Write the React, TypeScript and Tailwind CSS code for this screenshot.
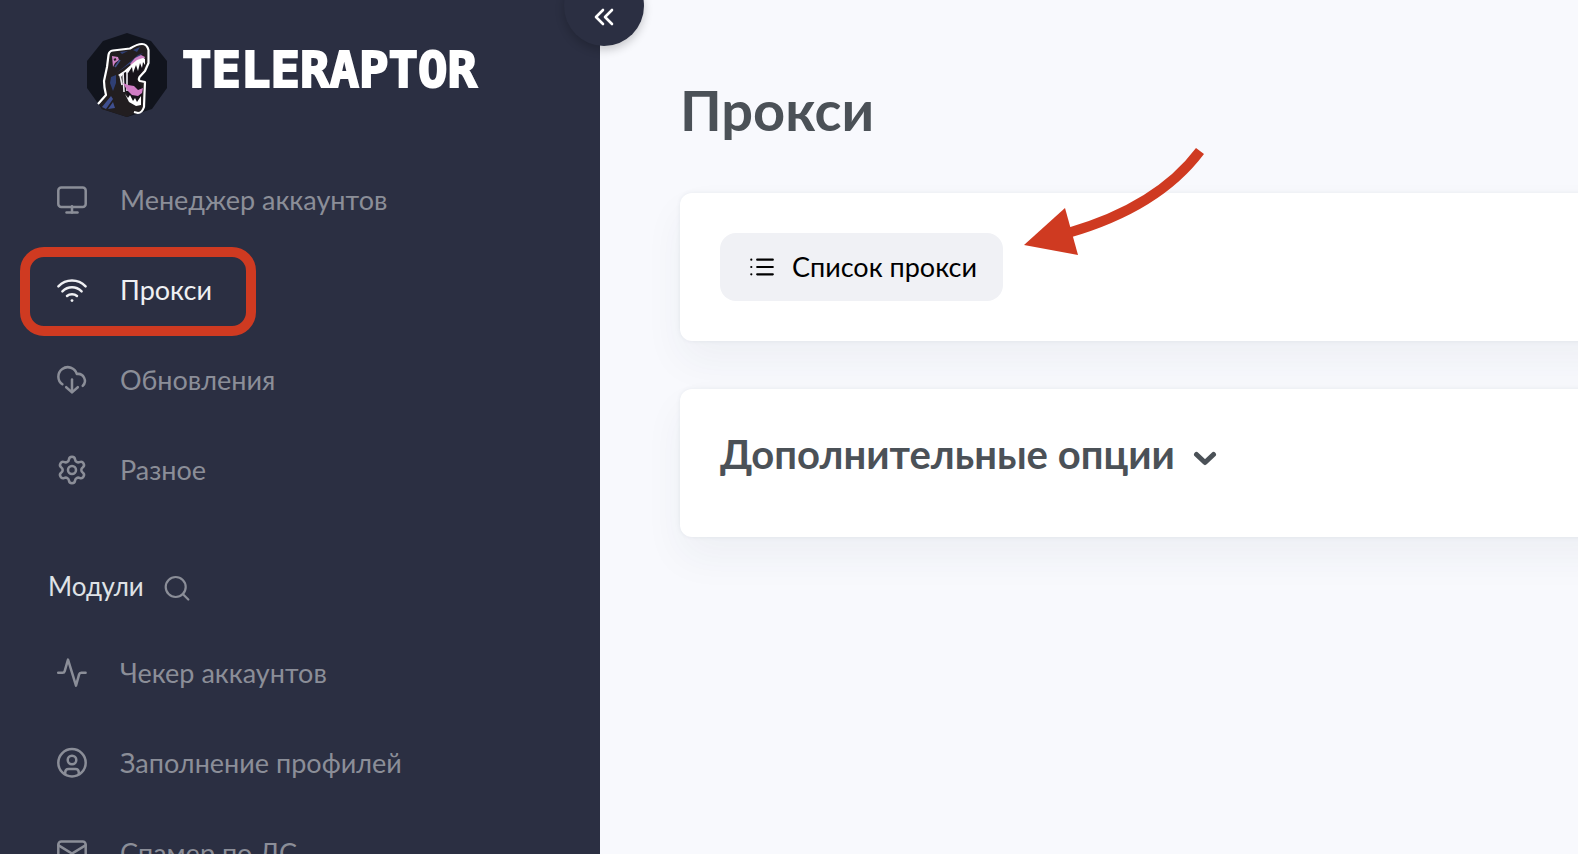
import React from 'react';
import { Settings } from 'lucide-react';

type IconProps = { children: React.ReactNode };

const NavIcon: React.FC<IconProps> = ({ children }) => (
  <svg
    viewBox="0 0 32 32"
    className="w-8 h-8 shrink-0"
    fill="none"
    stroke="currentColor"
    strokeWidth="2.5"
    strokeLinecap="round"
    strokeLinejoin="round"
    aria-hidden="true"
  >
    {children}
  </svg>
);

const mainItems = [
  {
    label: 'Менеджер аккаунтов',
    icon: (
      <NavIcon>
        <rect x="2.3" y="3.6" width="27.4" height="19.5" rx="3" />
        <path d="M16 22.2V28.4" />
        <path d="M10.5 28.4h11" />
      </NavIcon>
    ),
  },
  {
    label: 'Прокси',
    active: true,
    icon: (
      <NavIcon>
        <path d="M2.4 12.3C10 4.5 22 4.5 29.6 12.3" />
        <path d="M6.4 17.3C12 12 20 12 25.6 17.3" />
        <path d="M11 22c2.8-2.4 7.2-2.4 10 0" />
        <path d="M16 26.6h.01" strokeWidth="2.8" />
      </NavIcon>
    ),
  },
  {
    label: 'Обновления',
    icon: (
      <NavIcon>
        <path d="M6.4 20.3A9.4 9.4 0 1 1 20.8 10A6.9 6.9 0 0 1 26.7 21.8" />
        <path d="M16 15.6V28" />
        <path d="M10.2 23.2L16 28.4l5.8-5.2" />
      </NavIcon>
    ),
  },
  {
    label: 'Разное',
    icon: <Settings className="w-8 h-8 shrink-0" strokeWidth={1.9} />,
  },
];

const moduleItems = [
  {
    label: 'Чекер аккаунтов',
    icon: (
      <NavIcon>
        <path d="M2.2 15.8h4.4c1.1 0 1.8-.5 2.1-1.6L12 2.600l8 26 3.1-11.200c.3-1.1 1-1.6 2.1-1.6h4.4" />
      </NavIcon>
    ),
  },
  {
    label: 'Заполнение профилей',
    icon: (
      <NavIcon>
        <circle cx="16" cy="15.8" r="13.7" />
        <circle cx="16" cy="13" r="4.3" />
        <path d="M9.2 27v-1.6c0-2.2 1.2-3.5 3.4-3.5h6.8c2.2 0 3.4 1.3 3.4 3.5v1.6" />
      </NavIcon>
    ),
  },
  {
    label: 'Спамер по ЛС',
    icon: (
      <NavIcon>
        <rect x="2.3" y="4.5" width="27.4" height="22" rx="3" />
        <path d="M2.6 8.4L16 16.6 29.4 8.4" />
      </NavIcon>
    ),
  },
];

type Item = { label: string; icon: React.ReactNode; active?: boolean };

const NavLink: React.FC<Item> = ({ label, icon, active }) => (
  <a
    href="#"
    className={`relative flex items-center gap-8 h-[90px] pl-14 text-[27px] leading-9 ${
      active ? 'text-[#eff0f3]' : 'text-[#8b8e98]'
    }`}
  >
    {icon}
    <span>{label}</span>
    {active && (
      <span className="absolute left-5 top-0.5 w-[236px] h-[89px] rounded-3xl border-[10px] border-[#cf3a21]" />
    )}
  </a>
);

const Logo: React.FC = () => (
  <svg viewBox="0 0 80 84" className="w-20 h-[84px] shrink-0" aria-hidden="true">
    <path d="M40 0L64 8 80 28V55L65 76 40 84 15 76 0 55V28L16 8z" fill="#11141d" />
    {/* head */}
    <path
      d="M12 70L19 62 17 48 20 35 22 22 26 18 43 16 54 11 61 14 62 28 58 38 52 47 58 49 58 60 57 75 54 79 48 80 40 84 15 76z"
      fill="#221e20"
    />
    <path d="M15 74l9-11 2 3-7 10zM21 76l5-7 2 6z" fill="#3f4f8f" />
    <path d="M24 44l5-2v8l-3 8-3-8zM37 34l14-12 5-2-12 10-15 10zM33 19l8-1-6 3zM46 17l7-3-3 5z" fill="#2f3f74" />
    {/* mouth */}
    <path d="M35 39l9-6 6-8 7 1 1 6-4 9-4 6 4 6 1 8-4 9-10-7-4-10z" fill="#17121a" />
    <path d="M43 31l5-6 6-3 4 2-1 2-5 1-7 6z" fill="#cf82c4" />
    {/* upper teeth */}
    <path
      d="M31 42l6-4 8-7 5-4 6-2 2 1v6l-2-3-1 6-2-5-2 8-2-6-3 8-1-6-4 6-3-1-4 5z"
      fill="#fff"
    />
    <path d="M33 42l2 10M36 39l1 20M40 38v20" fill="none" stroke="#eceaf0" strokeWidth="1.6" />
    {/* tongue */}
    <path d="M36 50l5 2 6 1 4 4 5-2-1 5-4 3-6-1-5-5z" fill="#d07cc5" />
    {/* lower teeth */}
    <path d="M38 61l3 4 2-3 3 6 2-3 2 4 4-6v9l-5 1-7-4z" fill="#fff" />
    <path d="M25 23l6 1 1 3-4 3-2 4z" fill="#cf82c4" />
    <path d="M27 27l2-1" stroke="#221e20" strokeWidth="2" />
    <path d="M28 34l5-7" stroke="#46558f" strokeWidth="1.6" />
    {/* outline */}
    <path
      d="M11 71L19 62Q17 54 17 48L20 34 21.500 22Q22 18 26 17.500L43 15.500Q50 11 55 11T61.500 17L61.500 30 58 38 52.500 44Q51 47 53 48L58 49 57.500 60 57 74Q55 80 51 80L47 79"
      fill="none"
      stroke="#fff"
      strokeWidth="2.200"
      strokeLinejoin="round"
    />
  </svg>
);

const Sidebar: React.FC = () => (
  <aside className="relative z-10 w-[600px] shrink-0 bg-[#2b2f42]">
    <button
      type="button"
      aria-label="Свернуть меню"
      className="absolute -top-[34px] -right-11 w-20 h-20 rounded-full bg-[#2b2f42] text-white flex items-end justify-center pb-5 shadow-[0_4px_10px_rgba(0,0,0,0.2)]"
    >
      <svg viewBox="0 0 20 18" className="w-5 h-[18px]" fill="none" stroke="currentColor" strokeWidth="2.6" strokeLinecap="round" strokeLinejoin="round">
        <path d="M9 2L2 9l7 7M18 2l-7 7 7 7" />
      </svg>
    </button>

    {/* Brand */}
    <div className="flex items-center gap-[15px] pl-[87px] pt-[33px] mb-[38px]">
      <Logo />
      <span className="pb-2 font-['DejaVu_Sans_Mono',monospace] font-bold text-[49px] leading-[50px] text-white [-webkit-text-stroke:2px_white]">
        TELERAPTOR
      </span>
    </div>

    <nav>
      {mainItems.map((item) => (
        <NavLink key={item.label} {...item} />
      ))}

      <div className="flex items-center gap-5 h-[113px] pl-12 pt-7">
        <h2 className="text-[26px] leading-9 text-[#dfe2e6]">Модули</h2>
        <button type="button" aria-label="Поиск" className="pt-1 text-[#8b8e98]">
          <svg viewBox="0 0 26 26" className="w-[26px] h-[26px]" fill="none" stroke="currentColor" strokeWidth="2.2" strokeLinecap="round">
            <circle cx="11.7" cy="12" r="10" />
            <path d="M18.8 19l5.5 5.5" />
          </svg>
        </button>
      </div>

      {moduleItems.map((item) => (
        <NavLink key={item.label} {...item} />
      ))}
    </nav>
  </aside>
);

const cardClass =
  'relative bg-white rounded-xl -mr-10 p-10 shadow-[0_0_4px_rgba(40,60,90,0.08),0_20px_40px_rgba(40,50,80,0.05)]';

export default function App() {
  return (
    <div className="flex h-screen overflow-hidden bg-[#f8f9fd] font-['Lato',sans-serif]">
      <Sidebar />

      <main className="flex-1 min-w-0 pl-20 pt-[74px]">
        <h1 className="text-[56px] leading-[72px] font-bold text-[#4b5157] mb-[47px]">Прокси</h1>

        <section className={`${cardClass} mb-12`}>
          <button
            type="button"
            className="flex items-center gap-[18px] h-[68px] pl-[30px] pr-[26px] rounded-2xl bg-[#f0f1f5] text-black text-[27px] leading-9"
          >
            <svg viewBox="0 0 24 18" className="w-6 h-[18px]" fill="none" stroke="currentColor" strokeWidth="2.2" strokeLinecap="round">
              <path d="M7.2 1.7h15.6M7.2 9h15.6M7.2 16.3h15.6" />
              <path d="M1.3 1.7h.01M1.3 9h.01M1.3 16.3h.01" />
            </svg>
            Список прокси
          </button>

          {/* Arrow pointing at the list button */}
          <svg viewBox="0 0 182 110" className="absolute left-[342px] -top-12 w-[182px] h-[110px]" aria-hidden="true">
            <path d="M178 6Q136 62 46 88" fill="none" stroke="#cf3a21" strokeWidth="10" />
            <path d="M2 100L43 63l13 47z" fill="#cf3a21" />
          </svg>
        </section>

        <section className={cardClass}>
          <button type="button" className="flex items-center gap-[18px] mb-[18px] text-[#4b5157]">
            <span className="text-[40px] leading-[50px] font-bold">Дополнительные опции</span>
            <svg viewBox="0 0 24 24" className="w-6 h-6" fill="none" stroke="currentColor" strokeWidth="5" strokeLinecap="round" strokeLinejoin="round">
              <path d="M3.5 12.5L12 20.500l8.500-8" />
            </svg>
          </button>
        </section>
      </main>
    </div>
  );
}
